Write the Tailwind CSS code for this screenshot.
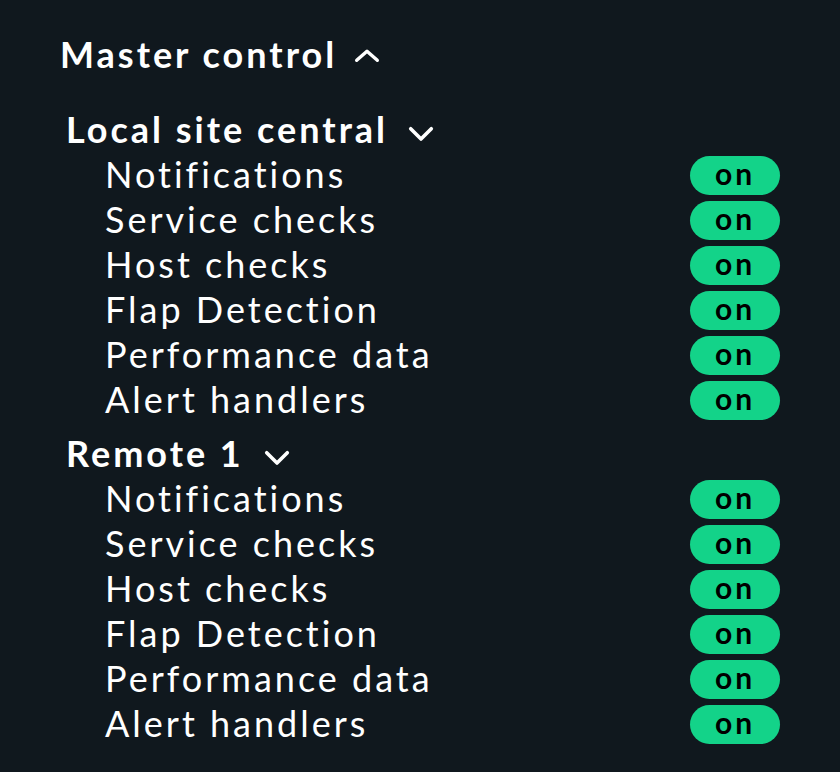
<!DOCTYPE html>
<html lang="en"><head><meta charset="utf-8"><title>Master control</title>
<script src="https://cdn.jsdelivr.net/npm/@tailwindcss/browser@4"></script></head>
<body class="min-h-screen bg-[#10181e] font-[Lato,sans-serif] text-white">
<main class="px-[60px] pt-8">
<h1 class="text-[36px] leading-[45px] font-bold tracking-[3px]"><button type="button" class="flex items-center gap-4">Master control
<svg class="h-6 w-7" viewBox="0 0 28 24" fill="none" stroke="currentColor" stroke-width="3.4" stroke-linecap="round" stroke-linejoin="round" aria-hidden="true"><path d="M3.7 17.3 14 8.2l10.3 9.1"/></svg></button></h1>
<div id="sites" class="flex flex-col gap-[9px] pt-[30px]"></div>
</main>
<template id="site"><section>
<h2 class="pl-[6px] text-[36px] leading-[45px] font-bold tracking-[3px]"><button type="button" class="flex items-center gap-[19px]"><span></span>
<svg class="mt-1 h-6 w-7" viewBox="0 0 28 24" fill="none" stroke="currentColor" stroke-width="3.6" stroke-linecap="round" stroke-linejoin="round" aria-hidden="true"><path d="M3.7 8.7 14 19 24.3 8.7"/></svg></button></h2>
<ul></ul></section></template>
<template id="row"><li class="flex h-[45px] items-center justify-between pl-[45px] text-[36px] leading-[45px] tracking-[3px]"><span></span><button type="button" class="mt-[2px] h-[39px] w-[90px] rounded-full bg-[#13d389] pb-1 text-[30px] leading-[35px] font-bold tracking-[3px] text-black">on</button></li></template>
<script>
const names=["Notifications","Service checks","Host checks","Flap Detection","Performance data","Alert handlers"];
for(const s of ["Local site central","Remote 1"]){const f=site.content.cloneNode(true);f.querySelector("span").textContent=s;
for(const n of names){const r=row.content.cloneNode(true);r.querySelector("span").textContent=n;r.querySelector("button").setAttribute("aria-label",n+": on");f.querySelector("ul").append(r)}
sites.append(f)}
</script></body></html>
